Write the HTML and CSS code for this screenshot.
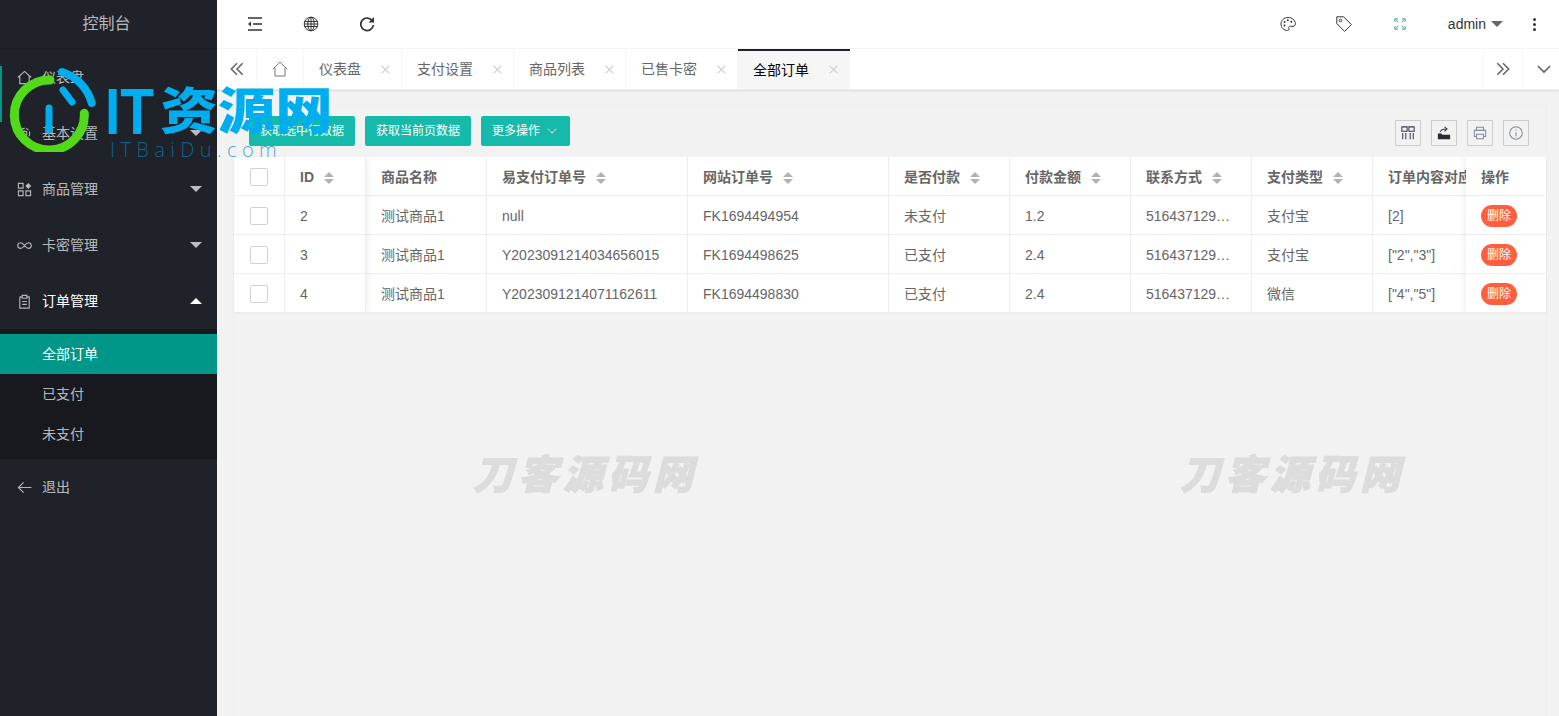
FILE: index.html
```html
<!DOCTYPE html>
<html lang="zh-CN">
<head>
<meta charset="utf-8">
<title>控制台</title>
<link rel="stylesheet" href="styles.css">
</head>
<body>
<div class="app">
  <aside class="side">
    <div class="brand">控制台</div>
    <ul class="menu">
      <li class="item"><svg class="mi" viewBox="0 0 16 16"><path d="M.8 8 8 1.500 15.200 8M3 6.500v8h10v-8"/></svg><span class="lbl">仪表盘</span></li>
      <li class="item"><svg class="mi" viewBox="0 0 16 16"><circle cx="8" cy="8" r="2.500"/><circle cx="8" cy="8" r="5.500" stroke-dasharray="3 1.500"/></svg><span class="lbl">基本设置</span><i class="tri"></i></li>
      <li class="item"><svg class="mi" viewBox="0 0 16 16"><path d="M1.500 1.500h5v5h-5zM1.500 9.500h5v5h-5zM9.500 9.500h5v5h-5z"/><path class="fill" d="M12 1 15.200 4.200 12 7.400 8.800 4.200z"/></svg><span class="lbl">商品管理</span><i class="tri"></i></li>
      <li class="item"><svg class="mi" viewBox="0 0 16 16"><path d="M8 8C6.500 5.800 5.200 5 3.800 5a3 3 0 0 0 0 6C5.200 11 6.500 10.200 8 8c1.500-2.200 2.800-3 4.200-3a3 3 0 0 1 0 6c-1.400 0-2.700-.8-4.200-3z"/></svg><span class="lbl">卡密管理</span><i class="tri"></i></li>
      <li class="item open"><svg class="mi" viewBox="0 0 16 16"><path d="M3 3h2.500M10.500 3H13v12H3V3M5.500 1.500h5v3h-5zM5.500 8h5M5.500 11h5"/></svg><span class="lbl">订单管理</span><i class="tri up"></i></li>
      <li class="sub">
        <a class="subitem on">全部订单</a>
        <a class="subitem">已支付</a>
        <a class="subitem">未支付</a>
      </li>
      <li class="item"><svg class="mi" viewBox="0 0 16 16"><path d="M15.500 8H1.500M7 2.500 1.500 8 7 13.500"/></svg><span class="lbl">退出</span></li>
    </ul>
  </aside>

  <main class="main">
    <header class="top">
      <div class="top-group">
        <span class="tool"><svg class="ti" viewBox="0 0 16 16"><path d="M1 2h14M6 8h9M1 14h14" stroke-width="1.500"/><path class="fill" d="M4 5.500v5L1 8z"/></svg></span>
        <span class="tool"><svg class="ti thin" viewBox="0 0 16 16"><circle cx="8" cy="8" r="6.800"/><ellipse cx="8" cy="8" rx="3.200" ry="6.800"/><path d="M8 1v14M1.500 5.500h13M1.500 8h13M1.500 10.500h13"/></svg></span>
        <span class="tool"><svg class="ti" viewBox="0 0 16 16"><path d="M13.500 5A6.300 6.300 0 1 0 14.400 9" stroke-width="1.700"/><path class="fill" d="M15 1v5.500H9.500z"/></svg></span>
      </div>
      <div class="top-group">
        <span class="tool"><svg class="ti thin" viewBox="0 0 16 16"><path d="M8 1.500C3.800 1.500 1 4.500 1 8c0 3.700 3 6.500 6.500 6.500 1.800 0 1.800-1.200 1.300-2.200-.5-1.200.3-2 1.500-2h2.700c1.500 0 2.500-1 2.500-2.800C15 4 12 1.500 8 1.500z"/><g class="fill"><circle cx="4.500" cy="9.500" r="1"/><circle cx="4.500" cy="6" r="1"/><circle cx="7.800" cy="4.300" r="1"/><circle cx="11.300" cy="5.800" r="1"/></g></svg></span>
        <span class="tool"><svg class="ti thin" viewBox="0 0 16 16"><path d="M.8.800h6.800l7.800 7.800-6.800 6.800L.8 7.600z"/><circle cx="4.500" cy="4.500" r="1.300"/></svg></span>
        <span class="tool"><svg class="ti small thin" viewBox="0 0 14 14"><path class="teal" d="M5 1H1v4M9 1h4v4M1 9v4h4M13 9v4H9M1 1l4 4M13 1 9 5M1 13l4-4M13 13 9 9"/></svg></span>
        <span class="user">admin<i class="caret"></i></span>
        <span class="dots"><i></i><i></i><i></i></span>
      </div>
    </header>

    <nav class="tabs">
      <span class="tab-ctl first"><svg class="ci" viewBox="0 0 16 16"><path d="M8 1.500 1.500 8 8 14.500M14.500 1.500 8 8l6.500 6.500"/></svg></span>
      <span class="tab-home"><svg class="hi" viewBox="0 0 16 16"><path d="M.8 8.200 8 1.200l7.200 7M3 6.800V15h10V6.800"/></svg></span>
      <span class="tab">仪表盘<i class="x"></i></span>
      <span class="tab">支付设置<i class="x"></i></span>
      <span class="tab">商品列表<i class="x"></i></span>
      <span class="tab">已售卡密<i class="x"></i></span>
      <span class="tab active">全部订单<i class="x"></i></span>
      <span class="tab-gap"></span>
      <span class="tab-ctl left"><svg class="ci" viewBox="0 0 16 16"><path d="M8 1.500 14.500 8 8 14.500M1.500 1.500 8 8l-6.500 6.500"/></svg></span>
      <span class="tab-ctl last"><svg class="ci" viewBox="0 0 16 16"><path d="M1 4.500 8 11.500l7-7"/></svg></span>
    </nav>

    <section class="content">
      <div class="card">
        <div class="toolbar">
          <div class="btns">
            <button class="btn">获取选中行数据</button>
            <button class="btn">获取当前页数据</button>
            <button class="btn">更多操作<svg class="down" viewBox="0 0 10 6"><path d="M.8.800 5 5 9.200.800"/></svg></button>
          </div>
          <div class="icons">
            <span class="ibox"><svg viewBox="0 0 16 16"><path class="plum" d="M1 1h6v5H1zM9 1h6v5H9zM2 8v7M5.500 8v7M10.500 8v7M14 8v7"/></svg></span>
            <span class="ibox"><svg viewBox="0 0 16 16"><path class="fill-dark" d="M1 8.500h4l1 1.500h9v5H1z"/><path class="plum" d="M3.500 7C4.500 4.500 6.500 3.500 10 3.500M8.500 1 11.500 3.500 8.500 6"/></svg></span>
            <span class="ibox"><svg viewBox="0 0 16 16"><path class="grey" d="M4 5V1.500h8V5M4 12H1.500V5h13v7H12M4 9.500h8v5H4z"/></svg></span>
            <span class="ibox"><svg viewBox="0 0 16 16"><circle class="grey" cx="8" cy="8" r="7.200"/><path class="grey" d="M8 7v5M8 4v1.500"/></svg></span>
          </div>
        </div>

        <div class="grid-wrap">
          <table class="grid">
            <colgroup>
              <col class="c1"><col class="c2"><col class="c3"><col class="c4"><col class="c4"><col class="c3"><col class="c3"><col class="c3"><col class="c3"><col class="c5">
            </colgroup>
            <thead>
              <tr>
                <th><span class="chk"></span></th>
                <th>ID<i class="sort"></i></th>
                <th>商品名称</th>
                <th>易支付订单号<i class="sort"></i></th>
                <th>网站订单号<i class="sort"></i></th>
                <th>是否付款<i class="sort"></i></th>
                <th>付款金额<i class="sort"></i></th>
                <th>联系方式<i class="sort"></i></th>
                <th>支付类型<i class="sort"></i></th>
                <th>订单内容对应卡密</th>
              </tr>
            </thead>
            <tbody>
              <tr><td><span class="chk"></span></td><td>2</td><td>测试商品1</td><td>null</td><td>FK1694494954</td><td>未支付</td><td>1.2</td><td>516437129@qq.com</td><td>支付宝</td><td>[2]</td></tr>
              <tr><td><span class="chk"></span></td><td>3</td><td>测试商品1</td><td>Y2023091214034656015</td><td>FK1694498625</td><td>已支付</td><td>2.4</td><td>516437129@qq.com</td><td>支付宝</td><td>["2","3"]</td></tr>
              <tr><td><span class="chk"></span></td><td>4</td><td>测试商品1</td><td>Y2023091214071162611</td><td>FK1694498830</td><td>已支付</td><td>2.4</td><td>516437129@qq.com</td><td>微信</td><td>["4","5"]</td></tr>
            </tbody>
          </table>
          <div class="fix-left"></div>
          <table class="grid fix-right">
            <thead><tr><th>操作</th></tr></thead>
            <tbody>
              <tr><td><span class="del">删除</span></td></tr>
              <tr><td><span class="del">删除</span></td></tr>
              <tr><td><span class="del">删除</span></td></tr>
            </tbody>
          </table>
        </div>
      </div>
      <div class="wm wm-a">刀客源码网</div>
      <div class="wm wm-b">刀客源码网</div>
    </section>
  </main>

  <div class="navbar"></div>
  <div class="logo">
    <svg class="logo-mark" viewBox="0 0 100 100">
      <path class="ring" d="M50 28A35 35 0 1 0 84.300 61.300"/>
      <path class="arc" d="M62 20A44.500 44.500 0 0 1 91.700 51"/>
      <path class="arc2" d="M49 56V78M63 38 72 50"/>
    </svg>
    <div class="logo-name"><span class="logo-it">IT</span>资源网</div>
    <div class="logo-sub">ITBaiDu.com</div>
  </div>
</div>
</body>
</html>
```

FILE: styles.css
```css
* { box-sizing: border-box; }
html, body { margin: 0; height: 100%; }
body {
  font-family: "Liberation Sans", "Noto Sans CJK SC", sans-serif;
  font-size: 14px;
  line-height: 20px;
  color: #666;
  overflow: hidden;
}
ul { list-style: none; margin: 0; padding: 0; }
i { font-style: normal; display: inline-block; }
svg { display: block; fill: none; stroke: currentColor; }
svg .fill, svg .fill * { fill: currentColor; stroke: none; }

.app { display: flex; height: 716px; width: 1559px; position: relative; overflow: hidden; }

/* sidebar */
.side { width: 217px; flex: none; background: #20222a; color: rgba(255,255,255,.7); }
.brand { height: 49px; line-height: 48px; padding-right: 4px; text-align: center; font-size: 16px; color: rgba(255,255,255,.7); border-bottom: 1px solid #1c1e25; }
.item { height: 56px; display: flex; align-items: center; padding-left: 17px; padding-right: 15px; }
.mi { width: 15px; height: 15px; color: #b5b6b9; stroke-width: 1.200; flex: none; }
.lbl { margin-left: 10px; flex: 1; margin-top: -1px; }
.open .lbl { color: #fff; }
.tri { width: 0; height: 0; border: 6px solid transparent; border-top-color: rgba(255,255,255,.7); border-bottom-width: 0; }
.tri.up { border-top-width: 0; border-bottom-width: 6px; border-top-color: transparent; border-bottom-color: #fff; }
.sub { background: #18191f; padding: 5px 0; }
.subitem { display: block; height: 40px; line-height: 40px; padding-left: 42px; color: rgba(255,255,255,.7); }
.subitem.on { background: #009688; color: #fff; }
.navbar { position: absolute; left: 0; top: 66px; width: 2px; height: 56px; background: #009688; }

/* header */
.main { flex: 1; min-width: 0; display: flex; flex-direction: column; background: #f2f2f2; }
.top { height: 49px; flex: none; background: #fff; border-bottom: 1px solid #f6f6f6; display: flex; justify-content: space-between; padding: 0 3px 0 10px; }
.top-group { display: flex; align-items: center; }
.tool { width: 56px; height: 48px; display: flex; align-items: center; justify-content: center; color: #333; }
.ti { width: 16px; height: 16px; stroke-width: 1.300; }
.ti.small { width: 12px; height: 12px; }
.ti.thin { stroke-width: 1; }
.teal { stroke: #4a8ca0; }
.user { padding: 0 10px 0 20px; color: #333; display: flex; align-items: center; line-height: 48px; }
.caret { width: 0; height: 0; margin-left: 5px; border: 6px solid transparent; border-top-color: #666; border-bottom-width: 0; }
.dots { width: 43px; display: flex; flex-direction: column; align-items: center; gap: 2px; }
.dots i { width: 3px; height: 3px; background: #333; border-radius: 50%; }

/* tabs */
.tabs { height: 41px; flex: none; background: #fff; display: flex; box-shadow: 0 1px 2px rgba(0,0,0,.1); position: relative; border-bottom: 1px solid #eee; }
.tab-ctl { width: 40px; display: flex; align-items: center; justify-content: center; color: #666; border-right: 1px solid #f6f6f6; }
.tab-ctl.left { border-left: 1px solid #f6f6f6; border-right: 1px solid #f6f6f6; }
.tab-ctl.last { width: 36px; border-right: 0; padding-left: 6px; }
.ci { width: 14px; height: 14px; stroke-width: 1.800; }
.tab-home { width: 47px; display: flex; align-items: center; justify-content: center; color: #777; border-right: 1px solid #f6f6f6; }
.hi { width: 16px; height: 16px; stroke-width: 1; }
.tab { display: flex; align-items: center; padding: 0 12px 0 15px; border-right: 1px solid #f6f6f6; color: #666; white-space: nowrap; }
.tab.active { background: #f6f6f6; color: #000; border-top: 2px solid #20222a; border-right: 0; width: 112px; }
.tab.active .x { margin-top: -2px; }
.tab-gap { flex: 1; }
.x { width: 9px; height: 9px; margin-left: 19px; position: relative; flex: none; }
.x::before, .x::after { content: ""; position: absolute; left: 5px; top: -1px; width: 1px; height: 11px; background: #ccc; transform: rotate(45deg); }
.x::after { transform: rotate(-45deg); }

/* content */
.content { flex: 1; min-height: 0; padding: 15px 12px 0 16px; position: relative; }
.card { height: 100%; border: 1px solid #eee; border-bottom: 0; background: #f2f2f2; }
.toolbar { display: flex; justify-content: space-between; align-items: center; padding: 10px 17px 0 15px; height: 40px; margin-bottom: 11px; }
.btns { display: flex; gap: 10px; }
.btn { height: 30px; padding: 0 13px 0 11px; border: 0; border-radius: 2px; background: #16baaa; color: #fff; font: inherit; font-size: 12px; display: flex; align-items: center; gap: 7px; }
.btn:not(:last-child) { padding: 0 11px; }
.down { width: 10px; height: 6px; stroke-width: 1; }
.icons { display: flex; gap: 10px; margin-top: 3px; }
.ibox { width: 26px; height: 26px; border: 1px solid #ccc; display: flex; align-items: center; justify-content: center; }
.ibox svg { width: 14px; height: 14px; stroke-width: 1.150; }
.plum { stroke: #40304f; }
.grey { stroke: #7f8a94; }
.fill-dark { fill: #2a2a33; stroke: none; }

/* table */
.grid-wrap { position: relative; overflow: hidden; box-shadow: 0 1px 2px rgba(0,0,0,.05); }
.grid { width: 100%; table-layout: fixed; border-collapse: separate; border-spacing: 0; background: #fff; }
.c1 { width: 51px; } .c2 { width: 81px; } .c3 { width: 121px; } .c4 { width: 201px; } .c5 { width: 173px; }
.grid th, .grid td { height: 39px; padding: 1px 15px 0; text-align: left; white-space: nowrap; overflow: hidden; text-overflow: ellipsis; border-right: 1px solid #eee; border-bottom: 1px solid #eee; font-size: 14px; line-height: 20px; color: #666; }
.grid th { font-weight: 700; }
.grid tbody tr:last-child td { height: 38px; border-bottom: 0; }
.grid th:last-child, .grid td:last-child { border-right: 0; }
.chk { display: block; width: 18px; height: 18px; margin: 0 0 0 1px; border: 1px solid #d2d2d2; border-radius: 2px; background: #fff; }
.sort { width: 10px; height: 12px; margin-left: 10px; position: relative; vertical-align: -2px; }
.sort::before, .sort::after { content: ""; position: absolute; left: 0; width: 0; height: 0; border: 5px solid transparent; }
.sort::before { top: 0; border-top-width: 0; border-bottom-color: #b2b2b2; }
.sort::after { bottom: 0; border-bottom-width: 0; border-top-color: #b2b2b2; }
.fix-left { position: absolute; left: 0; top: 0; bottom: 0; width: 132px; box-shadow: 1px 0 8px rgba(0,0,0,.08); pointer-events: none; }
.fix-right { position: absolute; right: 0; top: 0; width: 80px; box-shadow: -1px 0 8px rgba(0,0,0,.08); }
.del { display: block; width: 36px; height: 22px; line-height: 22px; text-align: center; border-radius: 11px; background: #ff5f3f; color: #fff; font-size: 12px; }

/* watermark */
.wm { position: absolute; top: 358px; font-family: "Noto Sans CJK SC", sans-serif; font-weight: 900; font-style: italic; font-size: 40px; line-height: 48px; letter-spacing: 5px; color: #dcdcdc; -webkit-text-stroke: 1px #dcdcdc; filter: blur(.6px); white-space: nowrap; }
.wm-a { left: 256px; }
.wm-b { left: 963px; }

/* logo overlay */
.logo { position: absolute; left: 0; top: 0; width: 340px; height: 160px; pointer-events: none; }
.logo-mark { position: absolute; left: 0; top: 52px; width: 100px; height: 100px; }
.ring { stroke: #52d91a; stroke-width: 9; stroke-linecap: round; }
.arc { stroke: #00adef; stroke-width: 8; stroke-linecap: round; }
.arc2 { stroke: #00adef; stroke-width: 7; stroke-linecap: round; }
.logo-name { position: absolute; left: 105px; top: 76px; font-family: "Noto Sans CJK SC", sans-serif; font-weight: 900; font-size: 50px; line-height: 62px; color: #00adef; transform: scaleX(1.15); transform-origin: left; white-space: nowrap; }
.logo-it { display: inline-block; width: 48px; height: 62px; line-height: 62px; vertical-align: -5px; font-family: "Liberation Sans", sans-serif; font-weight: 700; font-size: 64px; transform: scaleX(.75); transform-origin: left; }
.logo-sub { position: absolute; left: 110px; top: 137px; font-family: "Open Sans", sans-serif; font-weight: 300; font-size: 20px; line-height: 26px; letter-spacing: 5.400px; color: rgba(0,130,190,.7); white-space: nowrap; }
```
